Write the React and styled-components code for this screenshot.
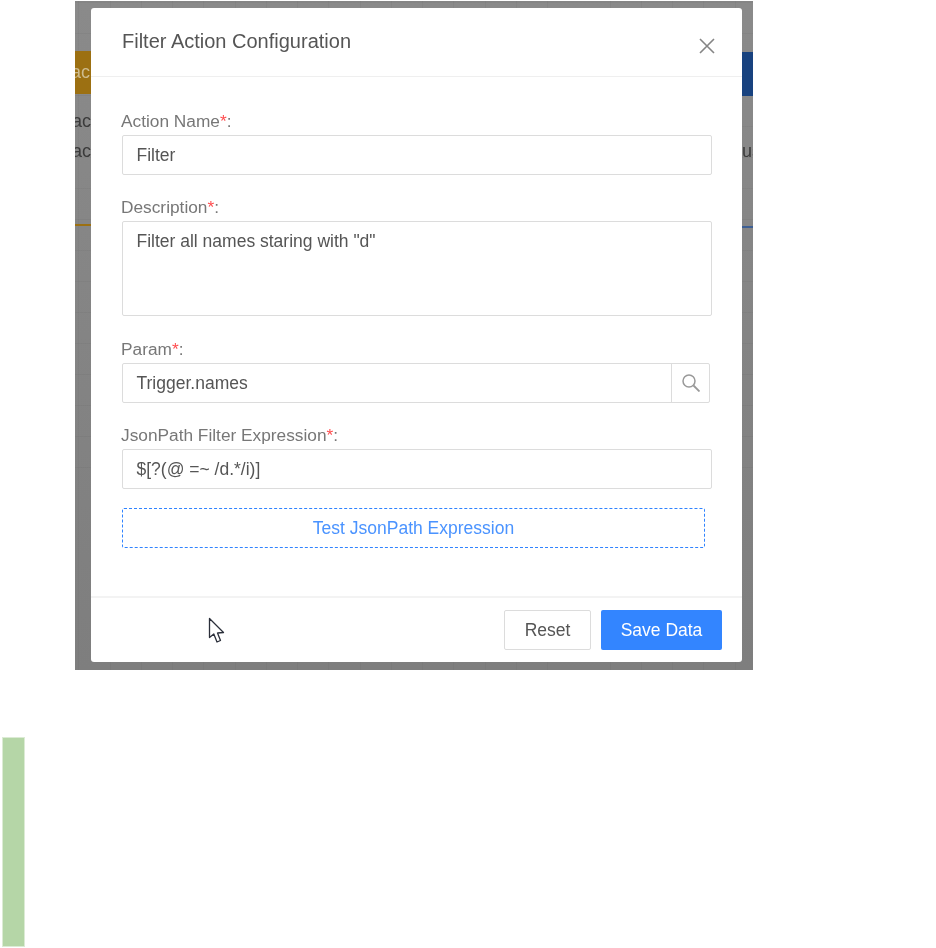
import React from "react";
import styled, { createGlobalStyle } from "styled-components";

const GlobalStyle = createGlobalStyle`
  html, body {
    margin: 0;
    padding: 0;
    background: #fff;
    font-family: "Liberation Sans", Arial, sans-serif;
  }
`;

const fields = [
  { label: "Action Name", value: "Filter" },
  { label: "Description", value: 'Filter all names staring with "d"', multiline: true },
  { label: "Param", value: "Trigger.names", search: true },
  { label: "JsonPath Filter Expression", value: "$[?(@ =~ /d.*/i)]" },
];

const Cursor = () => (
  <CursorIcon width="18" height="27" viewBox="0 0 18 27">
    <path
      d="M1.5 1.5 L1.5 20.5 L5.8 17 L9 25 L12.5 23.5 L9.5 16 L15.5 15.5 Z"
      fill="#fff"
      stroke="#2b2f3a"
      strokeWidth="1.3"
      strokeLinejoin="round"
    />
  </CursorIcon>
);

const SearchGlyph = () => (
  <svg width="18" height="18" viewBox="0 0 18 18" fill="none" stroke="#999">
    <circle cx="7" cy="7" r="6" strokeWidth="1.5" />
    <path d="M11.5 11.5 L17.5 17.5" strokeWidth="1.8" />
  </svg>
);

export default function App() {
  return (
    <Page>
      <GlobalStyle />
      <Stage>
        <OrangeTab>ac</OrangeTab>
        <BlueTab />
        <BackText $top={110}>tac</BackText>
        <BackText $top={140}>ac</BackText>
        <BackTextRight>us</BackTextRight>
        <OrangeLine />
        <BlueLine />
        <Modal>
          <Header>
            <Title>Filter Action Configuration</Title>
            <CloseIcon width="16" height="16" viewBox="0 0 16 16">
              <path d="M1 1 L15 15 M15 1 L1 15" stroke="#858585" strokeWidth="1.6" fill="none" />
            </CloseIcon>
          </Header>
          <Body>
            {fields.map((field) => (
              <Field key={field.label}>
                <Label>
                  {field.label}
                  <Star>*</Star>:
                </Label>
                {field.multiline ? (
                  <TextBox>{field.value}</TextBox>
                ) : field.search ? (
                  <SearchRow>
                    <SearchValue>{field.value}</SearchValue>
                    <SearchButton>
                      <SearchGlyph />
                    </SearchButton>
                  </SearchRow>
                ) : (
                  <InputBox>{field.value}</InputBox>
                )}
              </Field>
            ))}
            <TestButton>Test JsonPath Expression</TestButton>
          </Body>
          <Footer>
            <Cursor />
            <ResetButton>Reset</ResetButton>
            <SaveButton>Save Data</SaveButton>
          </Footer>
        </Modal>
      </Stage>
      <GreenBar />
    </Page>
  );
}

const Page = styled.div`
  width: 936px;
  height: 948px;
  overflow: hidden;
  padding-top: 1px;
  box-sizing: border-box;
  filter: blur(0.4px);
`;

const Stage = styled.div`
  position: relative;
  box-sizing: border-box;
  width: 678px;
  height: 669px;
  margin-left: 75px;
  padding: 7px 11px 8px 16px;
  overflow: hidden;
  background-color: #858585;
  background-image:
    repeating-linear-gradient(90deg, transparent 0 3.5px, rgba(0, 0, 0, 0.035) 3.5px 4.5px, transparent 4.5px 31.25px),
    repeating-linear-gradient(180deg, transparent 0 0.5px, rgba(0, 0, 0, 0.035) 0.5px 1.5px, transparent 1.5px 31px),
    linear-gradient(180deg, #8a8a8a, #7e7e7e);
`;

const OrangeTab = styled.div`
  position: absolute;
  left: 0;
  top: 50px;
  width: 16px;
  height: 43px;
  background: #9c7012;
  color: #cdbb8e;
  font-size: 18px;
  line-height: 43px;
  text-indent: -4px;
  overflow: hidden;
`;

const BlueTab = styled.div`
  position: absolute;
  right: 0;
  top: 51px;
  width: 11px;
  height: 44px;
  background: #18427f;
`;

const BackText = styled.div`
  position: absolute;
  left: 0;
  top: ${(p) => p.$top}px;
  width: 16px;
  overflow: hidden;
  direction: rtl;
  color: #3a3a3a;
  font-size: 18px;
`;

const BackTextRight = styled.div`
  position: absolute;
  right: 0;
  top: 140px;
  width: 11px;
  overflow: hidden;
  color: #3a3a3a;
  font-size: 18px;
`;

const OrangeLine = styled.div`
  position: absolute;
  left: 0;
  top: 223px;
  width: 16px;
  height: 2px;
  background: #9c7012;
`;

const BlueLine = styled.div`
  position: absolute;
  right: 0;
  top: 225px;
  width: 11px;
  height: 2px;
  background: #3d5f94;
`;

const Modal = styled.div`
  position: relative;
  display: flex;
  flex-direction: column;
  height: 654px;
  background: #fff;
  border-radius: 3px;
`;

const Header = styled.div`
  display: flex;
  align-items: center;
  justify-content: space-between;
  height: 69px;
  box-sizing: border-box;
  padding: 0 27px 0 31px;
  border-bottom: 1px solid #efefef;
`;

const Title = styled.div`
  font-size: 20px;
  color: #555;
  margin-top: -2px;
`;

const CloseIcon = styled.svg`
  margin-top: 8px;
`;

const Body = styled.div`
  flex: 1;
  padding: 32px 30px 0 31px;
`;

const Field = styled.div`
  display: flex;
  flex-direction: column;
  & + & {
    margin-top: 20px;
  }
`;

const Label = styled.div`
  height: 26px;
  line-height: 24px;
  margin-left: -1px;
  font-size: 17.3px;
  color: #777;
`;

const Star = styled.span`
  color: #ff4d4f;
`;

const InputBox = styled.div`
  box-sizing: border-box;
  width: 590px;
  height: 40px;
  padding: 0 13.5px;
  line-height: 38px;
  border: 1px solid #dcdcdc;
  border-radius: 2px;
  font-size: 17.5px;
  color: #555;
`;

const TextBox = styled(InputBox)`
  height: 95px;
  margin-bottom: 1px;
`;

const SearchRow = styled.div`
  display: flex;
  box-sizing: border-box;
  width: 588px;
  height: 40px;
  border: 1px solid #dcdcdc;
  border-radius: 2px;
`;

const SearchValue = styled.div`
  flex: 1;
  padding: 0 13.5px;
  line-height: 38px;
  font-size: 17.5px;
  color: #555;
`;

const SearchButton = styled.div`
  display: flex;
  align-items: center;
  justify-content: center;
  width: 37px;
  border-left: 1px solid #dcdcdc;
`;

const TestButton = styled.div`
  box-sizing: border-box;
  width: 583px;
  height: 40px;
  margin-top: 19px;
  border: 1px dashed #2f83ff;
  border-radius: 2px;
  text-align: center;
  line-height: 38px;
  font-size: 17.5px;
  color: #4a93ff;
`;

const Footer = styled.div`
  position: relative;
  display: flex;
  align-items: center;
  justify-content: flex-end;
  gap: 10px;
  height: 66px;
  box-sizing: border-box;
  padding: 0 20px;
  border-top: 2px solid #f3f3f3;
`;

const CursorIcon = styled.svg`
  position: absolute;
  left: 117px;
  top: 19px;
`;

const ResetButton = styled.div`
  box-sizing: border-box;
  width: 87px;
  height: 40px;
  border: 1px solid #dcdcdc;
  border-radius: 2px;
  text-align: center;
  line-height: 38px;
  font-size: 17.5px;
  color: #555;
`;

const SaveButton = styled.div`
  width: 121px;
  height: 40px;
  border-radius: 2px;
  background: #3385ff;
  text-align: center;
  line-height: 40px;
  font-size: 17.5px;
  color: #fff;
`;

const GreenBar = styled.div`
  width: 21px;
  height: 208px;
  margin: 68px 0 0 3px;
  background: #b5d6a7;
  box-shadow: 0 0 0 1px #dcebd5;
`;
